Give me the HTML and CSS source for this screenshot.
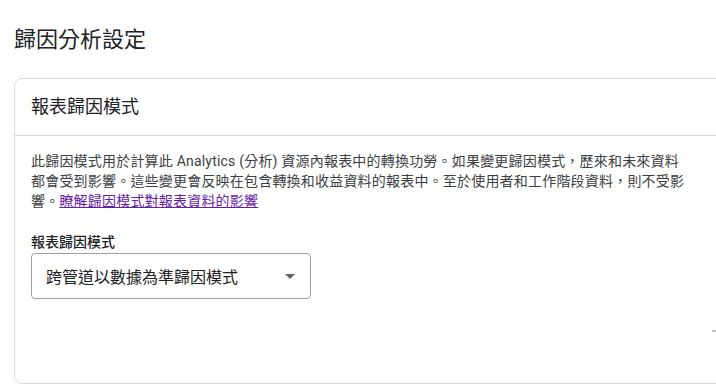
FILE: index.html
```html
<!DOCTYPE html>
<html lang="zh-Hant">
<head>
    <meta charset="UTF-8">
    <title>歸因分析設定</title>
    <link rel="stylesheet" href="styles.css">
</head>
<body>
  <div class="page">
    <h1 class="pageTitle">歸因分析設定</h1>

    <div class="card">
      <div class="cardHeader">報表歸因模式</div>
      <div class="cardBody">
        <p class="description">此歸因模式用於計算此 Analytics (分析) 資源內報表中的轉換功勞。如果變更歸因模式，歷來和未來資料都會受到影響。這些變更會反映在包含轉換和收益資料的報表中。至於使用者和工作階段資料，則不受影響。<a href="#">瞭解歸因模式對報表資料的影響</a></p>

        <label class="fieldLabel">報表歸因模式</label>
        <div class="select">
          <span class="selectValue">跨管道以數據為準歸因模式</span>
          <svg class="selectArrow" width="10" height="5" viewBox="0 0 10 5"><path d="M0 0 L10 0 L5 5 Z" fill="#5f6368"/></svg>
        </div>

        <div class="cardActions">
          <span class="actionEdge"></span>
        </div>
      </div>
    </div>
  </div>
</body>
</html>
```

FILE: styles.css
```css
body, html {
    border: 0;
    padding: 0;
    margin: 0;
    overflow: hidden;
    background: #fff;
}

body {
  font-family: Roboto, "Noto Sans CJK TC", sans-serif;
  color: #3c4043;
}

.page{
  padding: 26px 0 0 14px;
}

.pageTitle{
  margin: 0 0 24px 0;
  font-size: 22px;
  line-height: 28px;
  font-weight: 400;
  color: #202124;
}

.card{
  width: 720px;
  border: 1px solid #dadce0;
  border-radius: 8px;
}

.cardHeader{
  height: 56px;
  line-height: 56px;
  padding: 0 16px;
  font-size: 18px;
  color: #202124;
  border-bottom: 1px solid #dadce0;
}

.cardBody{
  padding: 15px 16px 51px 16px;
}

.description{
  margin: 0;
  width: 657px;
  font-size: 14px;
  line-height: 20px;
  letter-spacing: 0.2px;
  color: #3c4043;
}

.description a{
  color: #681da8;
  text-decoration: underline;
}

.fieldLabel{
  display: block;
  margin-top: 21px;
  font-size: 14px;
  line-height: 20px;
  font-weight: 500;
  color: #202124;
}

.select{
  margin-top: 1px;
  height: 44px;
  border: 1px solid #9aa0a6;
  border-radius: 4px;
  display: flex;
  align-items: center;
  justify-content: space-between;
  padding: 0 15px 0 14px;
  width: 249px;
}

.selectValue{
  font-size: 16px;
  color: #202124;
}

.selectArrow{
  display: block;
}

.cardActions{
  margin-top: 31px;
  height: 2px;
  padding-left: 681px;
}

.actionEdge{
  display: block;
  width: 22px;
  height: 2px;
  background: #bdc1c6;
}
```
